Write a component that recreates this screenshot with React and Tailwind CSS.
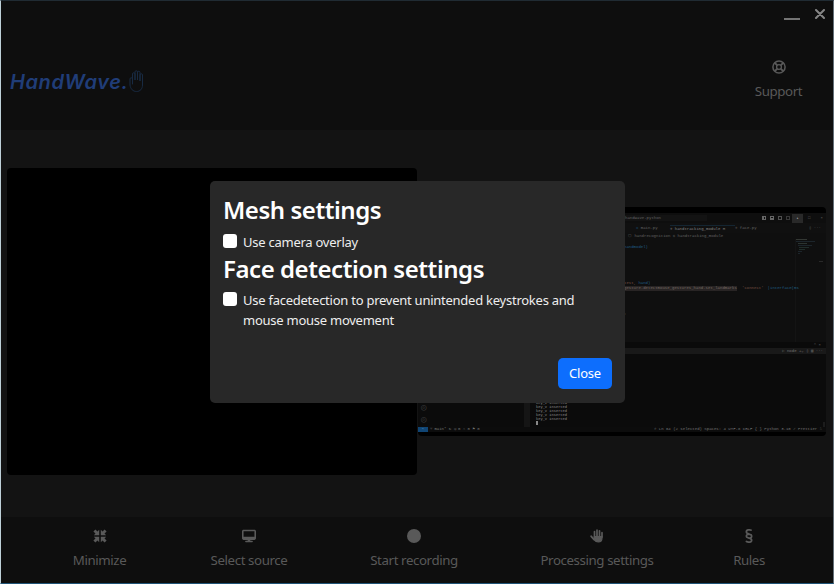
import React from 'react';
import { FaDesktop, FaCircle, FaSection } from 'react-icons/fa6';

function CompressIcon() {
  return (
    <svg className="h-[14px] w-[14px]" viewBox="0 0 14 14" fill="currentColor">
      <path d="M6.200 .8v5.400H.8l1.7-1.7L.4 2.400 2.400 .4l2.100 2.100z" />
      <path d="M7.800 .8v5.400h5.400l-1.700-1.700 2.100-2.100-2-2-2.100 2.100z" />
      <path d="M6.200 13.200V7.800H.8l1.7 1.7-2.100 2.100 2 2 2.100-2.100z" />
      <path d="M7.800 13.200V7.800h5.400l-1.700 1.700 2.100 2.100-2 2-2.100-2.100z" />
    </svg>
  );
}

function LifeRingIcon() {
  return (
    <svg className="h-[14px] w-[14px]" viewBox="0 0 14 14" fill="none" stroke="currentColor">
      <circle cx="7" cy="7" r="6.1" strokeWidth="1.5" />
      <circle cx="7" cy="7" r="2.4" strokeWidth="1.3" />
      <path d="M2.8 2.8l2.5 2.5M11.2 2.8L8.7 5.3M2.8 11.2l2.5-2.5M11.2 11.2L8.7 8.7" strokeWidth="1.9" />
    </svg>
  );
}

function HandIcon() {
  return (
    <svg className="h-[14px] w-[14px]" viewBox="0 0 14 14" fill="none" stroke="currentColor" strokeLinecap="round" strokeLinejoin="round">
      <path d="M4.5 8V2.5M7 8V1.2M9.5 8V1.8M12 8V3.7" strokeWidth="1.7" />
      <path d="M1.2 7.3l2.7 3.2" strokeWidth="1.8" />
      <path d="M4.3 7.7H12v1.4c0 2.3-1.4 3.9-3.7 3.9-2.2 0-3.2-1-4.5-2.7z" fill="currentColor" strokeWidth="1.2" />
    </svg>
  );
}

function LogoHand() {
  return (
    <svg className="h-[24px] w-[16px]" viewBox="0 0 16 24" fill="none" stroke="#182a42" strokeWidth="1" strokeLinecap="round" strokeLinejoin="round">
      <path d="M3.5 13V5a1.2 1.2 0 0 1 2.5 0v6V3a1.2 1.2 0 0 1 2.5 0v8V3.5a1.2 1.2 0 0 1 2.5 0V12V6a1.2 1.2 0 0 1 2.5 0v10c0 4-2.5 6.5-6 6.5S1.5 20 1 16V10a1.2 1.2 0 0 1 2.5 0v5" />
    </svg>
  );
}

function NavItem({ icon, label, className }) {
  return (
    <div className={`flex flex-col items-center text-[#595959] ${className}`}>
      <div className="flex h-4 items-center text-[14px]">{icon}</div>
      <span className="mt-[4px] text-[13.3px] leading-[24px] tracking-[-0.41px] whitespace-nowrap">{label}</span>
    </div>
  );
}

function CheckRow({ children }) {
  return (
    <div className="flex items-start gap-[6px]">
      <span className="mt-[2px] h-[14px] w-[14px] shrink-0 rounded-[3px] bg-white" />
      <span className="text-[13px] leading-[20px] tracking-[-0.25px] whitespace-nowrap">{children}</span>
    </div>
  );
}

function VideoPanel() {
  return <div className="mt-[10px] h-[307px] w-[410px] shrink-0 rounded-[4px] bg-black" />;
}

function ScreenPreview() {
  return (
    <div className="mt-[49px] ml-[1px] flex h-[229px] w-[408px] shrink-0 flex-col overflow-hidden rounded-[4px] bg-black pt-[6px] font-['Liberation_Mono',monospace] text-[4px] leading-[6px] text-[#626262]">
      <div className="flex h-[10px] shrink-0 items-center bg-[#0e0e0e] pl-[207px]">
        <span className="w-[82px] bg-[#131313]">handwave-python</span>
        <span className="ml-[55px] flex items-center gap-[2px]">
          <i className="h-[4px] w-[4px] border border-l-2 border-[#666]" />
          <i className="ml-[2px] h-[4px] w-[4px] border border-b-2 border-[#666]" />
          <i className="ml-[2px] h-[4px] w-[4px] border border-[#505050]" />
          <i className="ml-[2px] h-[4px] w-[4px] border border-[#383838]" />
          <b className="flex h-[9px] w-[11px] items-center justify-center bg-[#292929] text-[#aaa]">▴</b>
          <span className="ml-[3px]">□</span><span className="ml-[8px]">×</span>
        </span>
      </div>
      <div className="flex h-[10px] shrink-0 items-center bg-[#101010] pl-[218px] whitespace-nowrap">
        <span className="w-[34px]"><b className="text-[#18496a]">◇</b> main.py</span>
        <span className="w-[65px] border-t border-[#142531] text-[#858585]">✢ handtracking_module M</span>
        <span>✢ face.py</span>
        <span className="mr-[5px] ml-auto">▯ ···</span>
      </div>
      <div className="h-[6px] shrink-0 bg-[#0f0f0f] pl-[210px] whitespace-nowrap">⬡ handrecognition ◇ handtracking_module</div>
      <div className="flex h-[103px] shrink-0 bg-[#0f0f0f]">
        <div className="w-[378px] shrink-0 border-r border-[#141414] pl-[206px] whitespace-nowrap">
          <div className="h-[9px] pt-[5px] text-[#205e85]">handmodel)</div>
          <div className="h-[32px]" />
          <div><span className="text-[#765044]">test, </span><span className="text-[#205e85]">hand)</span></div>
          <div className="flex h-[5px] leading-[5px]">
            <span className="w-[113px] shrink-0 bg-[#282424] text-[#746963]">gesture.detectmouse_gestures_hand.set_landmarks</span>
            <span className="ml-[5px] text-[#765044]">'connect'</span>
            <span className="ml-[4px] text-[#205e85]">|interface(ms</span>
          </div>
          <div className="pt-[20px]">:</div>
        </div>
        <div className="flex flex-col gap-px">
          <i className="h-px w-[11px] bg-[#333733]" />
          <i className="h-px w-[19px] bg-[#1c252b]" />
          <i className="ml-[2px] h-px w-[9px] bg-[#2c3430]" />
          <i className="ml-[2px] h-px w-[14px] bg-[#1c252b]" />
          <i className="ml-[3px] h-px w-[10px] bg-[#202d2a]" />
          <i className="ml-[3px] h-px w-[6px] bg-[#202d2a]" />
          <i className="ml-[2px] h-px w-[4px] bg-[#1c252b]" />
          <i className="ml-[2px] h-px w-[2px] bg-[#1c252b]" />
          <i className="mt-[6px] ml-[23px] h-px w-[4px] bg-[#292929]" />
        </div>
      </div>
      <div className="h-[6px] shrink-0 bg-[#0a0a0a] pr-[5px] text-right leading-[6px]">⌃ ×</div>
      <div className="h-[6px] shrink-0 bg-[#191919] pr-[3px] text-right text-[#747474]">▷ node +⌄ ▯ ▥ ···</div>
      <div className="flex h-[73px] shrink-0 bg-[#0b0b0b]">
        <div className="w-[106px] pt-[48px] pl-[3px] text-[9px] leading-[12px] text-[#383838]">
          <div>◎</div><div>◎</div>
        </div>
        <div className="mt-[44px] w-[6px] bg-[#151515]" />
        <div className="w-[80px] pt-[47px] pl-[6px] text-[3.7px] leading-[4px] whitespace-nowrap text-[#8c8c8c]">
          <div>key_v inserted</div><div>key_v inserted</div><div>key_v inserted</div><div>key_v inserted</div><div>key_v inserted</div>
          <i className="block h-[4px] w-[2px] bg-[#888]" />
        </div>
        <div className="mt-auto mr-[1px] ml-auto h-[5px] w-[2px] bg-[#1c1c1c]" />
      </div>
      <div className="flex h-[5px] shrink-0 items-center bg-[#0c0c0c] leading-[5px] whitespace-nowrap">
        <span className="h-full w-[10px] bg-[#104574] text-center text-[#538cb6]">⌁</span>
        <span className="ml-[2px] text-[#747474]">⑂ main* ↻ ⓧ 0 ⚠ 0 ⚑ 0</span>
        <span className="mr-[4px] ml-auto text-[#747474]">⌕ Ln 64 (2 selected) Spaces: 4 UTF-8 CRLF {'{ }'} Python 3.10 ✓ Prettier ♧</span>
      </div>
    </div>
  );
}

export default function App() {
  return (
    <div className="h-[584px] w-[834px] overflow-hidden border border-t-[#202b33] border-r-[#65717a] border-b-[#205477] border-l-[#bed0d8] bg-[#131313] font-['Noto_Sans',sans-serif]">
      <div className="flex h-[582px] flex-col">
        <header className="flex h-[129px] shrink-0 justify-between bg-[#0e0e0e]">
          <div className="flex items-start pt-[68px] pl-[9px]">
            <span className="w-[119px] font-['Inter',sans-serif] text-[20px] leading-[26px] font-semibold tracking-[0.6px] whitespace-nowrap text-[#203d78] italic">HandWave.</span>
            <LogoHand />
          </div>
          <div className="w-[109px] pt-[8px]">
            <div className="flex h-[10px] justify-end gap-[15px] pr-[8px]">
              <i className="mt-[9px] h-[2px] w-[16px] bg-[#747474]" />
              <svg className="h-[10px] w-[10px]" viewBox="0 0 10 10"><path d="M1 1l8 8M9 1L1 9" stroke="#858585" strokeWidth="2" strokeLinecap="round" /></svg>
            </div>
            <NavItem icon={<LifeRingIcon />} label="Support" className="mt-[40px]" />
          </div>
        </header>
        <main className="flex h-[387px] shrink-0 bg-[#131313] pt-[28px] pl-[6px]">
          <VideoPanel />
          <ScreenPreview />
        </main>
        <footer className="flex h-[66px] shrink-0 bg-[#0e0e0e] pt-[11px]">
          <NavItem icon={<CompressIcon />} label="Minimize" className="ml-[68px] w-[61px]" />
          <NavItem icon={<FaDesktop />} label="Select source" className="ml-[78px] w-[82px]" />
          <NavItem icon={<FaCircle />} label="Start recording" className="ml-[73px] w-[102px]" />
          <NavItem icon={<HandIcon />} label="Processing settings" className="ml-[70px] w-[124px]" />
          <NavItem icon={<FaSection />} label="Rules" className="ml-[72px] w-[36px]" />
        </footer>
      </div>
      <div className="fixed top-[181px] left-[210px] flex h-[222px] w-[415px] flex-col rounded-[5px] bg-[#282828] px-[13px] pt-[13px] pb-[14px] text-[#eeeeee]">
        <h2 className="text-[24px] leading-[31px] font-semibold tracking-[-0.45px] text-white">Mesh settings</h2>
        <div className="mt-[7px]"><CheckRow>Use camera overlay</CheckRow></div>
        <h2 className="mt-[1px] text-[24px] leading-[31px] font-semibold tracking-[-0.45px] text-white">Face detection settings</h2>
        <div className="mt-[6px]"><CheckRow>Use facedetection to prevent unintended keystrokes and<br />mouse mouse movement</CheckRow></div>
        <button className="mt-auto h-[31px] w-[54px] self-end rounded-[5px] bg-[#0d6efd] text-[13px] tracking-[-0.2px] text-white">Close</button>
      </div>
    </div>
  );
}
